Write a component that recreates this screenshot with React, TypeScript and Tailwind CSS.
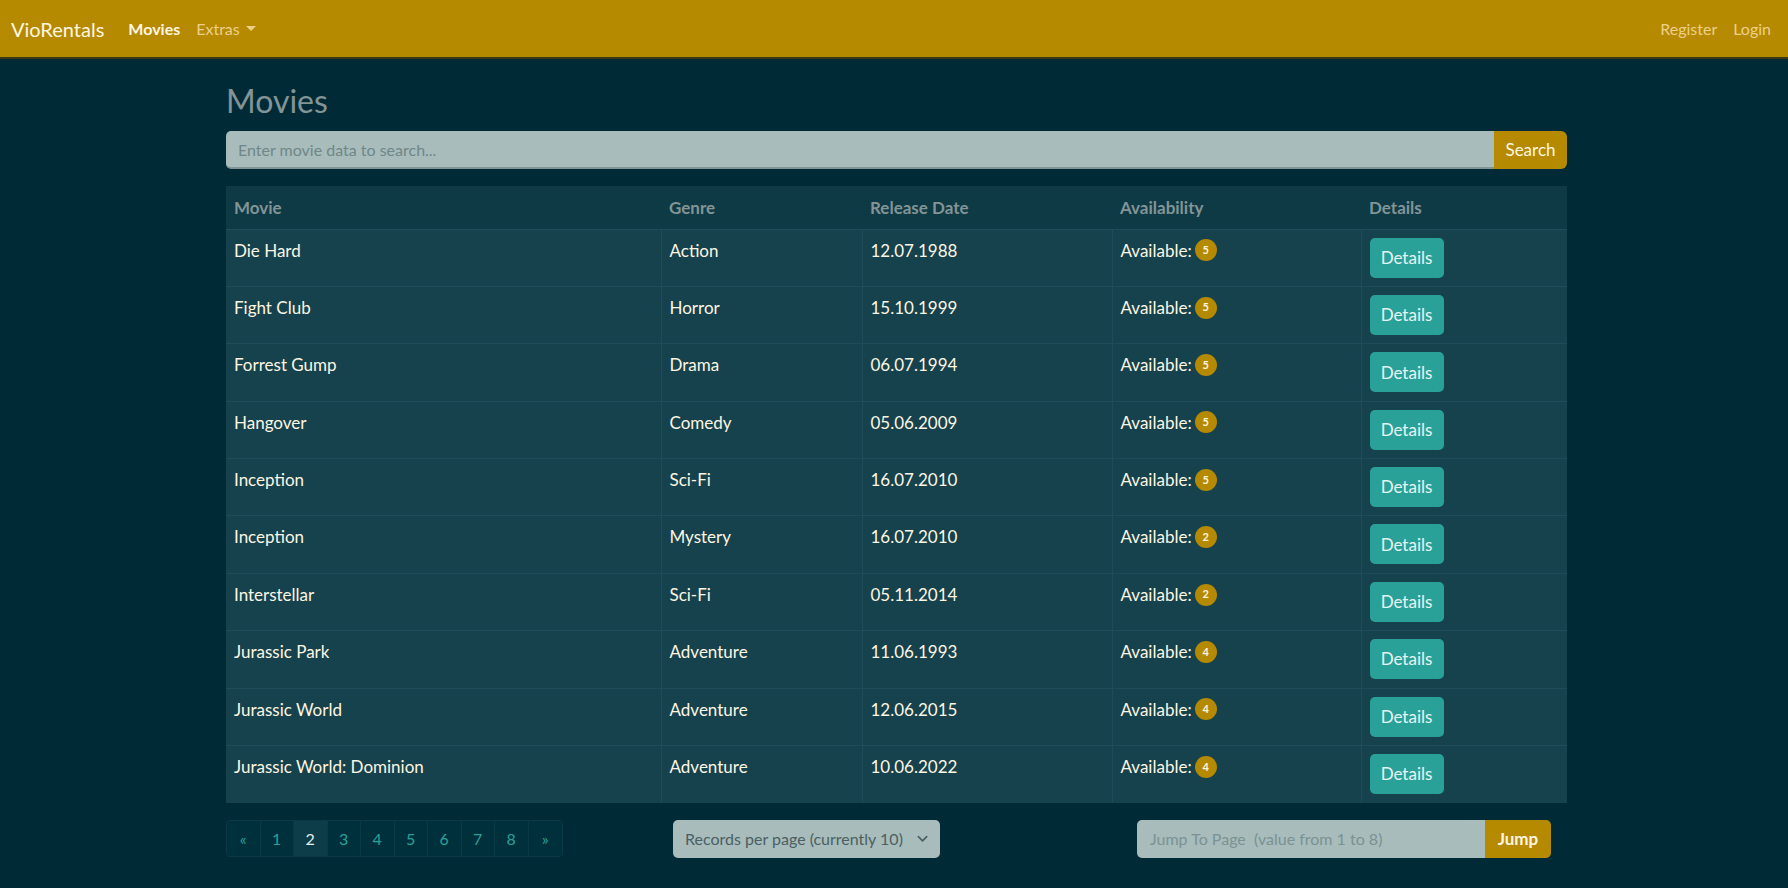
import React from "react";

const movies = [
  ["Die Hard", "Action", "12.07.1988", 5],
  ["Fight Club", "Horror", "15.10.1999", 5],
  ["Forrest Gump", "Drama", "06.07.1994", 5],
  ["Hangover", "Comedy", "05.06.2009", 5],
  ["Inception", "Sci-Fi", "16.07.2010", 5],
  ["Inception", "Mystery", "16.07.2010", 2],
  ["Interstellar", "Sci-Fi", "05.11.2014", 2],
  ["Jurassic Park", "Adventure", "11.06.1993", 4],
  ["Jurassic World", "Adventure", "12.06.2015", 4],
  ["Jurassic World: Dominion", "Adventure", "10.06.2022", 4],
] as const;

export default function App() {
  return (
    <div
      className="min-h-[888px] bg-[#002b36] text-[#fdf6e3]"
      style={{ fontFamily: "Lato, 'Noto Sans', sans-serif" }}
    >
      {/* Navbar */}
      <nav className="h-[59px] bg-[#b58900] border-b-2 border-[#3a3a10] flex items-center px-[11px]">
        <span className="text-[20px] text-[#fdf6e3] mr-[24px]">VioRentals</span>
        <span className="text-[16px] font-bold text-[#fdf6e3] mr-[16px]">Movies</span>
        <span className="text-[16px] text-[#ecd089] flex items-center">
          Extras
          <span className="ml-[6px] inline-block w-0 h-0 border-l-[5px] border-r-[5px] border-t-[5px] border-l-transparent border-r-transparent border-t-[#ecd089]" />
        </span>
        <div className="ml-auto flex items-center gap-[16px] mr-[6px]">
          <span className="text-[16px] text-[#ecd089]">Register</span>
          <span className="text-[16px] text-[#ecd089]">Login</span>
        </div>
      </nav>

      <div className="w-[1341px] ml-[226px] pt-[14px]">
        <h1 className="text-[32px] leading-[56px] text-[#839496] font-normal mb-[2px]">Movies</h1>

        {/* Search */}
        <div className="flex h-[38px]">
          <input
            className="flex-1 h-full bg-[#a8bcbc] rounded-l-[5px] px-[12px] text-[16px] text-[#586e75] placeholder:text-[#6f8788] outline-none border-b-2 border-[#7f9596]"
            placeholder="Enter movie data to search..."
          />
          <button className="w-[73px] h-full bg-[#b58900] rounded-r-[6px] text-[17px] text-[#fdf6e3]">
            Search
          </button>
        </div>

        {/* Table */}
        <table className="mt-[17px] w-full border-collapse table-fixed text-[17px]">
          <colgroup>
            <col className="w-[435px]" />
            <col className="w-[201px]" />
            <col className="w-[250px]" />
            <col className="w-[249px]" />
            <col className="w-[206px]" />
          </colgroup>
          <thead>
            <tr className="bg-[#0e3a45] h-[43px]">
              {["Movie", "Genre", "Release Date", "Availability", "Details"].map((h) => (
                <th key={h} className="text-left font-bold text-[#839496] px-[8px] align-middle">
                  {h}
                </th>
              ))}
            </tr>
          </thead>
          <tbody>
            {movies.map(([title, genre, date, n], i) => (
              <tr key={i} className="bg-[#15424d] h-[57.4px] border-t border-[#1d4d58]">
                <td className="px-[8px] pt-[8px] align-top border-r border-[#1d4d58]">{title}</td>
                <td className="px-[8px] pt-[8px] align-top border-r border-[#1d4d58]">{genre}</td>
                <td className="px-[8px] pt-[8px] align-top border-r border-[#1d4d58]">{date}</td>
                <td className="px-[8px] pt-[8px] align-top border-r border-[#1d4d58]">
                  <span className="inline-flex items-center">
                    Available:
                    <span className="ml-[3px] inline-flex items-center justify-center w-[22px] h-[22px] rounded-full bg-[#b58900] text-[11px] font-bold text-[#fdf6e3]">
                      {n}
                    </span>
                  </span>
                </td>
                <td className="px-[8px] py-[8px] align-top">
                  <button className="w-[74px] h-[40px] rounded-[5px] bg-[#2aa198] text-[17px] text-[#e6f4f1]">
                    Details
                  </button>
                </td>
              </tr>
            ))}
          </tbody>
        </table>

        {/* Bottom controls */}
        <div className="mt-[17px] flex items-center h-[38px]">
          <div className="flex shrink-0 h-[37px] border border-[#0c3945] rounded-[4px] overflow-hidden">
            {["«", "1", "2", "3", "4", "5", "6", "7", "8", "»"].map((p, i) => (
              <span
                key={i}
                className={
                  "w-[33.5px] flex items-center justify-center text-[16px] border-r border-[#0c3945] last:border-r-0 " +
                  (p === "2" ? "bg-[#0d3d49] text-[#e6eeee]" : "bg-[#00303b] text-[#2aa198]")
                }
              >
                {p}
              </span>
            ))}
          </div>

          <div className="ml-[110px] shrink-0 whitespace-nowrap w-[267px] h-[38px] bg-[#a8bcbc] rounded-[5px] flex items-center px-[12px] text-[16px] text-[#4b5f63]">
            Records per page (currently 10)
            <svg className="ml-[14px]" width="12" height="8" viewBox="0 0 12 8" fill="none">
              <path d="M1.5 1.5 L6 6 L10.5 1.5" stroke="#4b5f63" strokeWidth="1.8" strokeLinecap="round" strokeLinejoin="round" />
            </svg>
          </div>

          <div className="ml-[197px] shrink-0 flex h-[38px]">
            <input
              className="w-[348px] h-full bg-[#a8bcbc] rounded-l-[5px] px-[13px] text-[16px] placeholder:text-[#7a9292] outline-none"
              placeholder="Jump To Page  (value from 1 to 8)"
            />
            <button className="w-[66px] h-full bg-[#b58900] rounded-r-[5px] text-[17px] font-bold text-[#fdf6e3]">
              Jump
            </button>
          </div>
        </div>
      </div>
    </div>
  );
}
